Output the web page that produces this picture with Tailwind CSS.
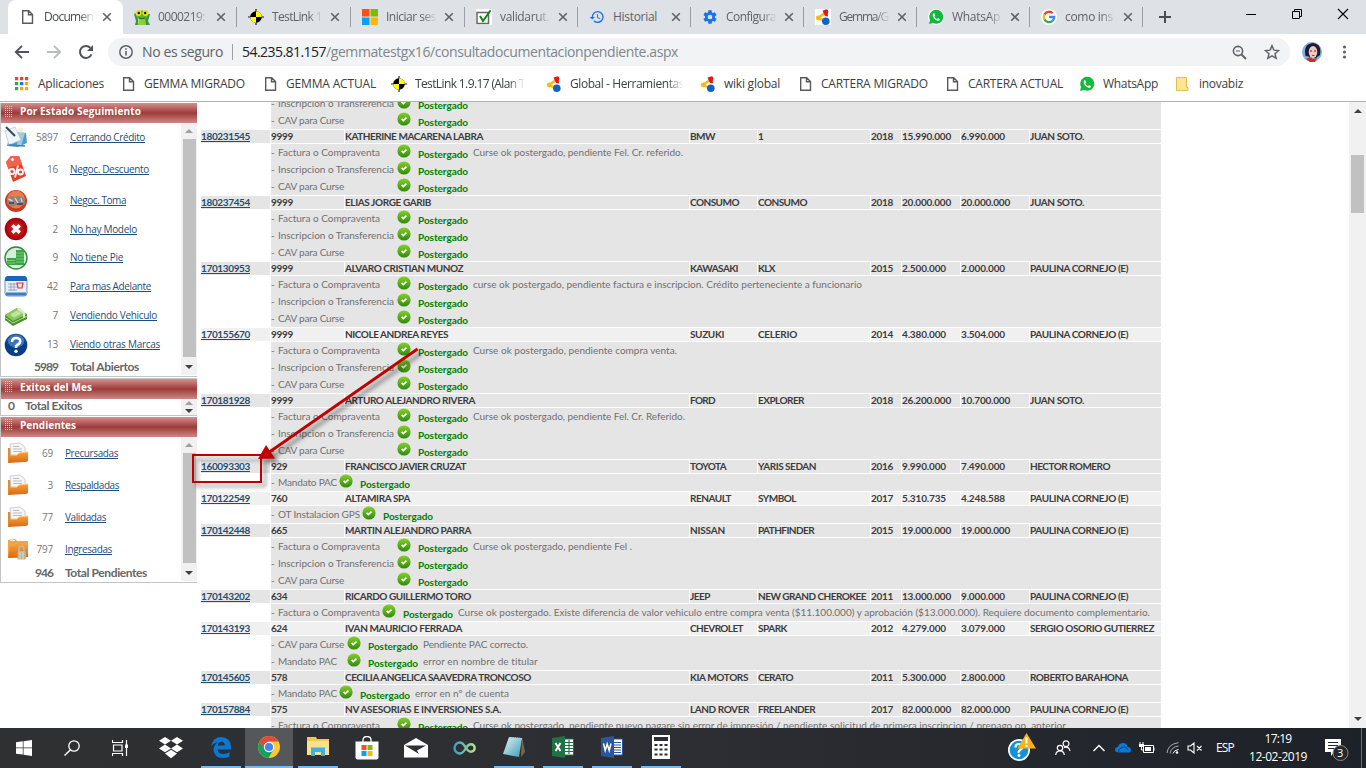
<!DOCTYPE html>
<html lang="es">
<head>
<meta charset="utf-8">
<title>Documentacion pendiente</title>
<script src="https://cdn.jsdelivr.net/npm/@tailwindcss/browser@4"></script>
</head>
<body class="relative flex h-[768px] w-[1366px] flex-col overflow-hidden bg-white font-['Open_Sans',sans-serif] text-[12px] text-[#5f6368]">

<svg class="absolute h-0 w-0">
  <defs>
    <linearGradient id="gGreen" x1="0" y1="0" x2="0" y2="1"><stop offset="0" stop-color="#86d02b"/><stop offset="1" stop-color="#2f8a0c"/></linearGradient>
    <radialGradient id="gRed"><stop offset="0" stop-color="#e0302c"/><stop offset="1" stop-color="#a30008"/></radialGradient>
    <linearGradient id="gFold" x1="0" y1="0" x2="0" y2="1"><stop offset="0" stop-color="#f7a03c"/><stop offset="1" stop-color="#d9690c"/></linearGradient>
    <linearGradient id="gInf" x1="0" y1="0" x2="1" y2="0"><stop offset="0" stop-color="#3b9fc4"/><stop offset="1" stop-color="#b4e08a"/></linearGradient>
    <linearGradient id="gNote" x1="0" y1="0" x2="1" y2="1"><stop offset="0" stop-color="#e4f6fa"/><stop offset="1" stop-color="#3f9bb4"/></linearGradient>
  </defs>
  <symbol id="page" viewBox="0 0 16 16"><path d="M1.700 1.700h6L11.500 5.500v8.800H1.700zM7.500 1.700v4h4" fill="none" stroke="#5a5a5a" stroke-width="1.400"/></symbol>
  <symbol id="frog" viewBox="0 0 16 16"><path d="M0 5l2-1 2 3v9H1l1-4zM16 5l-3 0-2 3v8h5l-2-4z" fill="#2e9a45"/><ellipse cx="8" cy="6" rx="6" ry="4.600" fill="#5cb531"/><path d="M5 9h6l1 7H4z" fill="#8ccf3a"/><circle cx="4.500" cy="4" r="3" fill="#e9e21d"/><circle cx="11.500" cy="4" r="3" fill="#e9e21d"/><circle cx="4.800" cy="4" r="1.200" fill="#111"/><circle cx="11.200" cy="4" r="1.200" fill="#111"/><path d="M5 9q3 1.600 6 0" stroke="#155a18" fill="none"/></symbol>
  <symbol id="tlink" viewBox="0 0 16 16"><path d="M8 0v16M0 8h16" stroke="#222" stroke-width="1.200"/><circle cx="8" cy="8" r="5.800" fill="#000"/><path d="M8 8V2.200A5.800 5.800 0 0 1 13.800 8zM8 8v5.800A5.800 5.800 0 0 1 2.200 8z" fill="#ff0"/></symbol>
  <symbol id="ms" viewBox="0 0 16 16"><path d="M0 0h7.500v7.500H0z" fill="#f6511d"/><path d="M8.500 0H16v7.500H8.500z" fill="#7fbb00"/><path d="M0 8.500h7.500V16H0z" fill="#00a4ef"/><path d="M8.500 8.500H16V16H8.500z" fill="#ffb900"/></symbol>
  <symbol id="check" viewBox="0 0 16 16"><path d="M0 0h16v16H0z" fill="#fff"/><path d="M1 3.500h11.500v11H1z" fill="#fff" stroke="#666" stroke-width="1.500"/><path d="M4 7l3 5L14.500 1.500" fill="none" stroke="#078a0a" stroke-width="2"/></symbol>
  <symbol id="hist" viewBox="0 0 24 24"><path d="M13 3a9 9 0 0 0-9 9H1l3.900 3.900L9 12H6a7 7 0 1 1 2.060 4.940l-1.420 1.420A9 9 0 1 0 13 3zm-1 5v5l4.280 2.540.720-1.210-3.500-2.080V8z" fill="#1a73e8"/></symbol>
  <symbol id="gear" viewBox="0 0 24 24"><path d="M19.430 12.980c.04-.32.07-.64.07-.98s-.03-.66-.07-.98l2.110-1.650c.19-.15.24-.42.120-.64l-2-3.460c-.12-.22-.39-.3-.61-.22l-2.490 1c-.52-.4-1.080-.73-1.690-.98l-.38-2.650A.49.49 0 0 0 14 2h-4c-.25 0-.46.180-.49.420l-.38 2.650c-.61.25-1.170.59-1.690.98l-2.490-1c-.23-.09-.49 0-.61.220l-2 3.460c-.13.220-.07.490.120.640l2.110 1.650c-.04.320-.07.650-.07.980s.03.660.07.980l-2.110 1.650c-.19.150-.24.420-.12.640l2 3.460c.12.220.39.300.61.220l2.490-1c.52.400 1.080.730 1.690.980l.38 2.650c.03.240.240.420.490.420h4c.25 0 .46-.18.49-.42l.38-2.650c.61-.25 1.170-.59 1.690-.98l2.490 1c.23.090.490 0 .61-.22l2-3.460c.12-.22.070-.49-.12-.64zM12 15.500a3.500 3.500 0 1 1 0-7 3.500 3.500 0 0 1 0 7z" fill="#1a73e8"/></symbol>
  <symbol id="jo" viewBox="0 0 16 16"><path d="M10 4L3 9l8 3.500" fill="none" stroke="#fdb813" stroke-width="2.400"/><path d="M7.500 1.500l5-1 .5 7-3-.5z" fill="#e0191c"/><circle cx="11" cy="2.800" r="2.400" fill="#e0191c"/><circle cx="3.300" cy="9" r="2.400" fill="#fdb813"/><circle cx="10.800" cy="12.200" r="3.800" fill="#0b66c2"/></symbol>
  <symbol id="jow" viewBox="0 0 16 16"><path d="M0 0h16v16H0z" fill="#fff"/><use href="#jo"/></symbol>
  <symbol id="wa" viewBox="0 0 16 16"><circle cx="8" cy="8" r="8" fill="#fff"/><path d="M1 15l1-4A7 7 0 1 1 5 14z" fill="#12b93f"/><path d="M5.500 4.200c-1.800 1.600-.3 4.200 1.300 5.800s4 2.600 5.200 1l-.2-1-1.700-.8-1 .9C7.800 9.500 7 8.600 6.400 7.400l.8-1-.7-1.900z" fill="#fff"/></symbol>
  <symbol id="goog" viewBox="0 0 16 16"><circle cx="8" cy="8" r="8" fill="#fff"/><g fill="none" stroke-width="2.300"><path d="M11.700 4.300A5.200 5.200 0 0 0 3.400 5.600" stroke="#ea4335"/><path d="M3.400 5.600a5.200 5.200 0 0 0 0 4.800" stroke="#fbbc05"/><path d="M3.400 10.400a5.200 5.200 0 0 0 8 1.500" stroke="#34a853"/><path d="M11.400 11.900A5.200 5.200 0 0 0 13.200 8H8" stroke="#4285f4"/></g></symbol>
  <symbol id="apps" viewBox="0 0 16 16"><path d="M1 1h3.200v3.200H1zM6 1h3.200v3.200H6zM11 1h3.200v3.200H11z" fill="#e94235"/><path d="M1 6h3.200v3.200H1zM1 11h3.200v3.200H1z" fill="#34a853"/><path d="M6 6h3.200v3.200H6z" fill="#1a73e8"/><path d="M11 6h3.200v3.200H11zM6 11h3.200v3.200H6zM11 11h3.200v3.200H11z" fill="#f5a911"/></symbol>
  <symbol id="fold" viewBox="0 0 16 16"><path d="M.500 1.500h10v10h1.500v3H.500z" fill="#ffe694" stroke="#e5bd4a"/></symbol>
  <symbol id="x" viewBox="0 0 10 10"><path d="M1.200 1.200l7.600 7.600M8.800 1.200L1.200 8.800" stroke="#5f6368" stroke-width="1.600"/></symbol>
  <symbol id="ok" viewBox="0 0 14 14"><circle cx="7" cy="7" r="6.600" fill="url(#gGreen)"/><path d="M4.600 6.900l1.700 1.700 3.200-3" fill="none" stroke="#fff" stroke-width="1.700"/></symbol>

  <symbol id="s0" viewBox="0 0 24 24"><path d="M5 13l9-6 8 1 1 10-9 4-11-1z" fill="#4f9bcc"/><path d="M14 7l7 1-4 13-4-1z" fill="#9ccbe6"/><path d="M1 6l10-4 6 13-12 5z" fill="#eef4f8" stroke="#a8bccb" stroke-width=".6"/><path d="M2 2l9 9" stroke="#344656" stroke-width="2"/><path d="M12 6l4-4 4 2-3 4z" fill="#f2f1d8"/><path d="M5 20l16 1" stroke="#4181ab" stroke-width="1.400"/></symbol>
  <symbol id="s1" viewBox="0 0 24 28"><path d="M2 7l5-6h8l7 20-13 6z" fill="#e8412c"/><path d="M2 7l5-6h8l3 8-14 4z" fill="#f1634c"/><circle cx="8.500" cy="4.500" r="1.700" fill="#fff" stroke="#888" stroke-width=".6"/><g fill="none" stroke="#fff" stroke-width="1.800"><circle cx="8" cy="16.500" r="2.500"/><circle cx="16.500" cy="17" r="2.500"/><path d="M14 10.500l-3 12"/></g></symbol>
  <symbol id="s2" viewBox="0 0 24 24"><circle cx="12" cy="12" r="11" fill="#c93a22"/><circle cx="12" cy="10.500" r="9" fill="#ee7a4e"/><path d="M3 9q4-3 8-1l3-1q6 0 7 4v4q-4 3-7 1l-5 1q-5 0-6-3z" fill="#8c8582"/><path d="M4.500 10l4 2M11 9l3 5M17 9l1 4" stroke="#d5d2d0" stroke-width="1.400"/><path d="M5 14h5M13 15h6" stroke="#463e3e" stroke-width="1.500"/></symbol>
  <symbol id="s3" viewBox="0 0 24 24"><circle cx="12" cy="12" r="11.300" fill="url(#gRed)"/><path d="M8.300 8.300l7.400 7.400M15.700 8.300l-7.400 7.400" stroke="#fff" stroke-width="3.500"/></symbol>
  <symbol id="s4" viewBox="0 0 24 24"><circle cx="12" cy="12" r="11" fill="#d9eed8" stroke="#2b8b35" stroke-width="1.400"/><path d="M12 4h8v15h-8zM3 12h9v7H3z" fill="#3ba443"/><path d="M12 7h8M12 10h8M12 13h8M12 16h8M3 14.500h8M3 17h8" stroke="#8bd48c" stroke-width=".8"/></symbol>
  <symbol id="s5" viewBox="0 0 24 22"><rect x="1" y="2" width="22" height="19" rx="3" fill="#e8eef6" stroke="#6a93c8"/><path d="M1 4q0-3 3-3h16q3 0 3 3v2H1z" fill="#1b66b4"/><path d="M4 9h9M4 12h9M4 15h9M7 8v8M10 8v8" stroke="#8d9db5" stroke-width=".8"/><path d="M13 8h6l-1 5h-4z" fill="#f6dedf" stroke="#d23a3a" stroke-width="1.200"/><path d="M2 17.500h20v2q0 1-2 1H4q-2 0-2-1z" fill="#3b7ec6"/></symbol>
  <symbol id="s6" viewBox="0 0 24 22"><path d="M1 10l12-7 10 6v5L9 21l-8-6z" fill="#4c8f31"/><path d="M1 10l12-7 10 6-14 7z" fill="#8cc95c"/><path d="M6 9.500l7-4 5 3-8 4z" fill="#bfe49c"/><path d="M1 12.500l8 5.500 14-7" stroke="#b3dd90" fill="none"/><path d="M13 3.500l3-1 5 5v5l-2 1v-5l-5-3z" fill="#dcebcb"/></symbol>
  <symbol id="s7" viewBox="0 0 24 24"><circle cx="12" cy="12" r="11.300" fill="#073f86"/><ellipse cx="12" cy="8" rx="8.500" ry="6.500" fill="#3b76bb"/><path d="M8 9q0-4 4.200-4t4 3.500q0 2-2.200 3t-2 3.500" stroke="#fff" stroke-width="2.600" fill="none"/><circle cx="12" cy="18.300" r="1.700" fill="#fff"/></symbol>
  <symbol id="p0" viewBox="0 0 22 22"><path d="M1 6h5l1 3v10l-6 2z" fill="#e08a2e"/><path d="M3 2l10-1 5 4v10H4z" fill="#f6f6f6" stroke="#c4c4c4" stroke-width=".8"/><path d="M6 4.500h6M6 7h9M6 9.500h9" stroke="#b0b0b0" stroke-width=".8"/><path d="M1 21l3-8h6l2-2 9-1v9q-1 1-3 1z" fill="url(#gFold)"/><path d="M4 13h6l2-2 9-1" stroke="#ffc887" fill="none"/></symbol>
  <symbol id="p1" viewBox="0 0 22 22"><path d="M1 2l7-1 2 2h11v16l-20 1z" fill="#f4a244"/><path d="M3 2.500h5" stroke="#fff3dc"/><path d="M1 20l2-12h5l2-2h11v13z" fill="url(#gFold)"/><path d="M12 14v-3q0-3 2.500-3t2.500 3v3" fill="none" stroke="#b9b9b9" stroke-width="1.600"/><rect x="10.500" y="13" width="8.500" height="8.500" rx="1" fill="#b9b49b"/><path d="M13 13.500v7.500M16 13.500v7.500" stroke="#e2dfcc"/></symbol>
  <symbol id="grip" viewBox="0 0 8 12"><path fill="#e7c1bf" d="M0 0h1v1H0zM2 0h1v1H2zM4 0h1v1H4zM6 0h1v1H6zM0 2h1v1H0zM2 2h1v1H2zM4 2h1v1H4zM6 2h1v1H6zM0 4h1v1H0zM2 4h1v1H2zM4 4h1v1H4zM6 4h1v1H6zM0 6h1v1H0zM2 6h1v1H2zM4 6h1v1H4zM6 6h1v1H6zM0 8h1v1H0zM2 8h1v1H2zM4 8h1v1H4zM6 8h1v1H6zM0 10h1v1H0zM2 10h1v1H2zM4 10h1v1H4zM6 10h1v1H6z"/></symbol>
  <symbol id="up" viewBox="0 0 8 4"><path d="M0 4L4 0l4 4z" fill="currentColor"/></symbol>
  <symbol id="down" viewBox="0 0 8 4"><path d="M0 0l4 4 4-4z" fill="currentColor"/></symbol>
</svg>

<!-- Tab strip -->
<header class="flex h-[34px] shrink-0 bg-[#dee1e6]">
  <div id="tabs" class="flex"></div>
  <div class="flex w-[48px] items-center pl-[16px]">
    <svg class="h-3 w-3" viewBox="0 0 12 12"><path d="M6 0v12M0 6h12" stroke="#4a4d51" stroke-width="2"/></svg>
  </div>
  <div class="ml-auto flex h-[28px] items-center">
    <div class="flex w-[46px] justify-center"><svg class="h-3 w-3" viewBox="0 0 12 12"><path d="M1 6.500h10" stroke="#000"/></svg></div>
    <div class="flex w-[46px] justify-center"><svg class="h-3 w-3" viewBox="0 0 12 12"><path d="M1.500 3.500h7v7h-7zM3.500 3.500v-2h7v7h-2" fill="none" stroke="#000"/></svg></div>
    <div class="flex w-[46px] justify-center"><svg class="h-3 w-3" viewBox="0 0 12 12"><path d="M1 1l10 10M11 1L1 11" stroke="#000" stroke-width="1.100"/></svg></div>
  </div>
</header>

<!-- Address bar -->
<div class="flex h-[36px] shrink-0 items-center">
  <svg class="ml-[14px] h-4 w-4" viewBox="0 0 16 16"><path d="M15 8H2M8 1.800L1.800 8 8 14.200" fill="none" stroke="#505357" stroke-width="1.900"/></svg>
  <svg class="ml-[16px] h-4 w-4" viewBox="0 0 16 16"><path d="M1 8h13M8 1.800L14.200 8 8 14.200" fill="none" stroke="#b9bbbe" stroke-width="1.900"/></svg>
  <svg class="ml-[16px] h-4 w-4" viewBox="0 0 16 16"><path d="M13.500 10.300A6 6 0 1 1 12.300 3.800" fill="none" stroke="#505357" stroke-width="2"/><path d="M15 1v6H9z" fill="#505357"/></svg>
  <div class="ml-[14px] flex h-[28px] w-[1182px] items-center rounded-full bg-[#f1f3f4] text-[14px]">
    <svg class="ml-[11px] h-[14px] w-[14px]" viewBox="0 0 14 14"><circle cx="7" cy="7" r="6.200" fill="none" stroke="#5f6368" stroke-width="1.500"/><path d="M7 6v4.500M7 3.200v1.600" stroke="#5f6368" stroke-width="1.600"/></svg>
    <div class="ml-[9px] w-[90px] pb-[1px]"><span data-w="81">No es seguro</span></div>
    <div class="h-4 w-px bg-[#9aa0a6]"></div>
    <div class="ml-[9px] flex pb-[1px] text-[#80868b]"><span class="text-[#202124]" data-w="84">54.235.81.157</span><span data-w="352">/gemmatestgx16/consultadocumentacionpendiente.aspx</span></div>
    <svg class="mr-[17px] ml-auto h-[15px] w-[15px]" viewBox="0 0 15 15"><circle cx="6" cy="6" r="4.600" fill="none" stroke="#5f6368" stroke-width="1.600"/><path d="M9.500 9.500l4.500 4.500" stroke="#5f6368" stroke-width="2"/><path d="M4 6h4" stroke="#5f6368"/></svg>
    <svg class="mr-[10px] h-[16px] w-[16px]" viewBox="0 0 24 24"><path d="M12 2.500l2.800 6.700 7.200.600-5.500 4.700 1.700 7L12 17.800l-6.200 3.700 1.700-7L2 9.800l7.200-.6z" fill="none" stroke="#5f6368" stroke-width="2.200"/></svg>
  </div>
  <svg class="ml-[12px] h-5 w-5" viewBox="0 0 20 20"><circle cx="10" cy="10" r="10" fill="#7fb0e6"/><path d="M3.500 14Q1 2 11 1q9 1 7 12l-4 3z" fill="#221a2e"/><ellipse cx="11" cy="10" rx="4.300" ry="6" fill="#edc9c4"/><path d="M4 17l4-2 3 2 4-1-2 4H8z" fill="#c4301c"/><path d="M8 9h2M12 9h2" stroke="#433"/><path d="M10 13.500h2.500" stroke="#b33"/></svg>
  <svg class="ml-[20px] h-[14px] w-[5px]" viewBox="0 0 5 14"><g fill="#5f6368"><circle cx="2.500" cy="2" r="1.600"/><circle cx="2.500" cy="7" r="1.600"/><circle cx="2.500" cy="12" r="1.600"/></g></svg>
</div>

<!-- Bookmarks -->
<nav id="marks" class="flex h-[31px] shrink-0 items-center pb-[3px] pl-[14px] text-[#3c4043]"></nav>

<!-- Page -->
<main class="flex h-[627px] shrink-0 overflow-hidden border-t border-[#b3b1b3] font-[Lato,sans-serif] text-[10px]">
  <aside class="w-[198px] shrink-0 pr-px font-['Open_Sans',sans-serif]">
    <section class="h-[274px] border-b border-l border-[#c4c4c4]">
      <h2 class="mt-[1px] flex h-[20px] items-center bg-linear-to-b from-[#d4908f] via-[#9c3b39] to-[#cd8886] pb-[3px] pl-[4px] font-bold text-white"><svg class="mr-[7px] h-3 w-2"><use href="#grip"/></svg><span data-w="121">Por Estado Seguimiento</span></h2>
      <div class="flex h-[252px]">
        <div id="estado" class="w-[180px]"></div>
        <div class="flex w-[16px] flex-col items-center bg-[#f1f1f1] pt-[6px] pb-[6px]"><svg class="h-1 w-2 text-[#a0a0a0]"><use href="#up"/></svg><div class="mt-[6px] h-[218px] w-[13px] bg-[#c1c1c1]"></div><svg class="mt-auto h-1 w-2 text-[#404040]"><use href="#down"/></svg></div>
      </div>
    </section>
    <section class="mt-[1px] h-[38px] border-y border-l border-[#c4c4c4]">
      <h2 class="flex h-[20px] items-center bg-linear-to-b from-[#d4908f] via-[#9c3b39] to-[#cd8886] pb-[4px] pl-[4px] font-bold text-white"><svg class="mr-[7px] h-3 w-2"><use href="#grip"/></svg><span data-w="72">Exitos del Mes</span></h2>
      <div class="flex h-[16px]">
        <div class="flex w-[180px] items-center pb-[2px] pl-[7px] font-[Lato,sans-serif] text-[12px] font-bold text-[#666]"><span data-w="6">0</span><span class="ml-[11px]" data-w="57">Total Exitos</span></div>
        <div class="flex w-[16px] flex-col items-center justify-center gap-[4px] bg-[#f1f1f1]"><svg class="h-1 w-2 text-[#a0a0a0]"><use href="#up"/></svg><svg class="h-1 w-2 text-[#404040]"><use href="#down"/></svg></div>
      </div>
    </section>
    <section class="h-[166px] border-b border-l border-[#c4c4c4]">
      <h2 class="mt-[1px] flex h-[20px] items-center bg-linear-to-b from-[#d4908f] via-[#9c3b39] to-[#cd8886] pb-[4px] pl-[4px] font-bold text-white"><svg class="mr-[7px] h-3 w-2"><use href="#grip"/></svg><span data-w="56">Pendientes</span></h2>
      <div class="flex h-[144px]">
        <div id="pend" class="w-[180px]"></div>
        <div class="flex w-[16px] flex-col items-center bg-[#f1f1f1] pt-[6px] pb-[6px]"><svg class="h-1 w-2 text-[#a0a0a0]"><use href="#up"/></svg><div class="mt-[6px] h-[110px] w-[13px] bg-[#c1c1c1]"></div><svg class="mt-auto h-1 w-2 text-[#404040]"><use href="#down"/></svg></div>
      </div>
    </section>
  </aside>
  <div id="grid" class="-mt-[7px] ml-[3px] w-[960px] shrink-0"></div>
  <div class="ml-auto flex w-[17px] flex-col items-center bg-[#f1f1f1] pt-[7px] pb-[7px]">
    <svg class="h-1 w-2 text-[#404040]"><use href="#up"/></svg>
    <div class="mt-[42px] h-[58px] w-[13px] bg-[#c1c1c1]"></div>
    <svg class="mt-auto h-1 w-2 text-[#404040]"><use href="#down"/></svg>
  </div>
</main>

<!-- Taskbar -->
<footer class="flex h-[40px] shrink-0 bg-linear-to-r from-[#2e3032] via-[#2d2e33] to-[#1d2128] text-white">
  <div class="flex w-[48px] items-center justify-center"><svg class="h-4 w-4" viewBox="0 0 16 16"><path d="M0 2.300l6.800-1v6.300H0zM7.500 1.200L16 0v7.600H7.500zM0 8.300h6.800v6.300L0 13.700zM7.500 8.300H16V16l-8.500-1.200z" fill="#fff"/></svg></div>
  <div class="flex w-[48px] items-center justify-center"><svg class="h-4 w-4" viewBox="0 0 16 16"><circle cx="10" cy="6" r="5.200" fill="none" stroke="#fff" stroke-width="1.300"/><path d="M6.500 9.800L.5 15.500" stroke="#fff" stroke-width="1.500"/></svg></div>
  <div class="flex w-[48px] items-center justify-center"><svg class="h-4 w-4" viewBox="0 0 16 16"><path d="M.500 0v2.500h10V0M.500 16v-2.500h10V16M1.500 5h8.500v6H1.500zM14.500 0v16" fill="none" stroke="#fff" stroke-width="1.200"/><path d="M13 4.500h3v3.500h-3z" fill="#fff"/></svg></div>
  <div class="flex w-[54px] items-center justify-center"><svg class="h-[22px] w-6" viewBox="0 0 24 22"><path d="M6 0l6 3.800-6 3.800L0 3.800zM18 0l6 3.800-6 3.800-6-3.800zM6 7.600l6 3.800-6 3.800-6-3.800zM18 7.600l6 3.800-6 3.800-6-3.800zM6 16.600l6-3.800 6 3.800-6 4.600z" fill="#fff"/></svg></div>
  <div class="flex w-[46px] justify-center"><div class="flex w-[40px] items-center justify-center border-b-2 border-[#76b9ed]"><svg class="h-[21px] w-5" viewBox="0 0 20 21"><path d="M0 9.500Q1.500 0 10.500 0 20 1 20 10v2.500H6.500q.5 4.500 6 4.500 3.300 0 6-1.700v4.200Q16 21 12 21 3 21 2.500 12.500 3 7.500 7 5.200 2.500 5.800 0 9.500zM6.800 8.500h7q0-3.700-3.300-3.700T6.800 8.500z" fill="#0a78d7" fill-rule="evenodd"/></svg></div></div>
  <div class="ml-px flex w-[48px] items-center justify-center border-b-2 border-[#76b9ed] bg-[#55575a]"><svg class="h-[22px] w-[22px]" viewBox="0 0 22 22"><circle cx="11" cy="11" r="11" fill="#fcc934"/><path d="M11 5.500h9.500A11 11 0 0 0 1.500 5.500L6 13z" fill="#de4b3c"/><path d="M1.500 5.500A11 11 0 0 0 10.500 22l5-8.500L6.500 13z" fill="#17a05e"/><circle cx="11" cy="11" r="5.200" fill="#fff"/><circle cx="11" cy="11" r="4.100" fill="#4285f4"/></svg></div>
  <div class="ml-[5px] flex w-[40px] items-center justify-center border-b-2 border-[#76b9ed]"><svg class="h-5 w-[22px]" viewBox="0 0 22 20"><path d="M0 0h9l1 2h12v16H0z" fill="#f3c84e"/><path d="M0 4h22v14H0z" fill="#fce08a"/><path d="M4 19v-8.500h14V19h-4v-4H8v4z" fill="#38b2e8"/></svg></div>
  <div class="ml-[5px] flex w-[48px] items-center justify-center"><svg class="h-6 w-6" viewBox="0 0 24 24"><path d="M8 6V4q0-3.500 4-3.500T16 4v2" fill="none" stroke="#fff" stroke-width="1.300"/><path d="M.500 5.500h23v16q0 2-2 2h-19q-2 0-2-2z" fill="#fff"/><path d="M6.500 9h5v5h-5z" fill="#f25022"/><path d="M12.500 9h5v5h-5z" fill="#7fba00"/><path d="M6.500 15h5v5h-5z" fill="#00a4ef"/><path d="M12.500 15h5v5h-5z" fill="#ffb900"/></svg></div>
  <div class="flex w-[50px] items-center justify-center"><svg class="h-5 w-6" viewBox="0 0 24 20"><path d="M0 7l12-7 12 7v12.500H0z" fill="#fff"/><path d="M1 7.500h21L13 12.500l2 3.500z" fill="#2e3034"/></svg></div>
  <div class="flex w-[48px] items-center justify-center"><svg class="h-[14px] w-6" viewBox="0 0 24 14"><path d="M13 7C11 3.500 9.500 1.500 7 1.500a5.500 5.500 0 0 0 0 11c2.500 0 4-2 6-5.500 1.500-2.500 3-3.700 5-3.700a3.700 3.700 0 0 1 0 7.400c-2 0-3.500-1.200-5-3.700z" fill="none" stroke="url(#gInf)" stroke-width="2.400"/></svg></div>
  <div class="ml-[5px] flex w-[40px] items-center justify-center border-b-2 border-[#76b9ed]"><svg class="h-[22px] w-[22px]" viewBox="0 0 22 22"><path d="M19 1l3 15-4 5z" fill="#7b6848"/><path d="M6 1l13 1-3 19L0 18z" fill="url(#gNote)"/><path d="M6 2l13 1" stroke="#bcc8cd" stroke-width="2" stroke-dasharray="1 1"/></svg></div>
  <div class="ml-[9px] flex w-[40px] items-center justify-center border-b-2 border-[#76b9ed]"><svg class="h-[22px] w-[22px]" viewBox="0 0 22 22"><path d="M12 3h9.500v16H12z" fill="#fff" stroke="#1f7244"/><path d="M13 6.500h8M13 9.500h8M13 12.500h8M13 15.500h8M17 4v14" stroke="#1f7244" stroke-width="1.200"/><path d="M0 2l13-2v22L0 20z" fill="#1f7244"/><path d="M3.500 7l5 8M8.500 7l-5 8" stroke="#fff" stroke-width="1.900"/></svg></div>
  <div class="ml-[9px] flex w-[40px] items-center justify-center border-b-2 border-[#76b9ed]"><svg class="h-[22px] w-[22px]" viewBox="0 0 22 22"><path d="M12 3h9.500v16H12z" fill="#fff" stroke="#2b579a"/><path d="M13 6.500h7M13 9h7M13 11.500h7M13 14h7M13 16.500h7" stroke="#2b579a"/><path d="M0 2l13-2v22L0 20z" fill="#2b579a"/><path d="M2.500 7.500l1.700 7 2-6.500 2 6.500 1.800-7" fill="none" stroke="#fff" stroke-width="1.500"/></svg></div>
  <div class="ml-[9px] flex w-[40px] items-center justify-center border-b-2 border-[#76b9ed]"><svg class="h-6 w-[18px]" viewBox="0 0 18 24"><path d="M0 0h18v24H0z" fill="#fff"/><path d="M2 2h14v4H2z" fill="#2b2d31"/><path d="M2.500 10h3M7.500 10h3M12.500 10h3M2.500 14.500h3M7.500 14.500h3M12.500 14.500h3M2.500 19.500h3M7.500 19.500h3M12.500 19.500h3" stroke="#2b2d31" stroke-width="2"/></svg></div>
  <div class="ml-auto flex items-center">
    <svg class="mr-[18px] h-[30px] w-[30px]" viewBox="0 0 30 30"><circle cx="12" cy="17" r="11" fill="#fff"/><circle cx="12" cy="17" r="9.300" fill="#1393d6"/><path d="M8.500 14.500q0-3.500 3.500-3.500t3.500 3q0 2-2.200 3t-1.500 3" stroke="#fff" stroke-width="2.200" fill="none"/><circle cx="12" cy="22.500" r="1.400" fill="#fff"/><path d="M19.500 0L29 15.500H10.500z" fill="#f7b21c"/><path d="M19.500 4.500v6M19.500 12v2" stroke="#fff" stroke-width="2"/></svg>
    <svg class="mr-[22px] h-4 w-4" viewBox="0 0 16 16"><g fill="none" stroke="#fff" stroke-width="1.200"><circle cx="5" cy="8" r="2.700"/><path d="M.700 15q.3-4.200 4.300-4.200T9.300 15"/><circle cx="11" cy="3.700" r="2.900"/><path d="M9 7.500q5-1.500 6 3.500"/></g></svg>
    <svg class="mr-[10px] h-3 w-3" viewBox="0 0 12 12"><path d="M.500 9L6 3.500 11.500 9" fill="none" stroke="#fff" stroke-width="1.400"/></svg>
    <svg class="mr-[8px] h-[10px] w-4" viewBox="0 0 16 10"><path d="M3 9.500Q0 9 0 6.500T3 4q1-4 5-4t4.500 4q3.500 0 3.500 3t-3 2.500z" fill="#0a78d7"/><path d="M4 9.500q-1-4 2.500-4.500 4-3 6 1.500" stroke="#23262b" fill="none" stroke-width=".7"/></svg>
    <svg class="mr-[11px] h-3 w-4" viewBox="0 0 16 12"><path d="M4.500 3.500h10v7h-10z" fill="none" stroke="#fff"/><path d="M6 5h6v4H6z" fill="#fff"/><path d="M15 5.500v3M1 0v3M4 0v3M2.500 5v3h2" stroke="#fff" fill="none"/><path d="M0 2h5v3H0z" fill="#fff"/></svg>
    <svg class="mr-[8px] h-3 w-[13px]" viewBox="0 0 13 12"><g fill="none" stroke="#aaa"><path d="M1 11Q2 2 12.500.700"/><path d="M4 11.500Q5 5 12.500 4"/><path d="M7 11.500Q8 8 12.500 7.500" stroke="#fff"/></g><circle cx="11" cy="10.500" r="1.300" fill="#fff"/></svg>
    <svg class="mr-[13px] h-3 w-4" viewBox="0 0 16 12"><path d="M1 4h2.500L7 1v10L3.500 8H1zM10 4l4.500 4.500M14.500 4L10 8.500" fill="none" stroke="#fff" stroke-width="1.100"/></svg>
    <span data-w="18">ESP</span>
    <div class="ml-[13px] flex w-[62px] flex-col items-center pb-[1px] leading-[18px]"><span data-w="27">17:19</span><span data-w="58">12-02-2019</span></div>
    <div class="relative ml-[16px] h-[20px] w-[26px]">
      <svg class="h-[24px] w-[26px]" viewBox="0 0 26 24"><path d="M0 1h16v13H9l-3 4v-4H0z" fill="#fff"/><path d="M3 4.500h10M3 7.500h10M3 10.500h7" stroke="#23262b"/><circle cx="15.500" cy="15" r="7.500" fill="#24272c" stroke="#888"/></svg>
      <span class="absolute top-[8px] left-[12px] text-[11px] leading-[14px]">3</span>
    </div>
    <div class="ml-[10px] h-[40px] w-[5px] border-l border-[#6a6d71]"></div>
  </div>
</footer>

<!-- Arrow and frame drawn over the grid -->
<svg class="absolute top-[335px] left-[180px] h-[160px] w-[250px] [filter:drop-shadow(4px_4px_2px_rgba(0,0,0,.45))]" viewBox="180 335 250 160">
  <rect x="193" y="455" width="68" height="27" fill="none" stroke="#c00000" stroke-width="2"/>
  <path d="M417.500 349L268 453" stroke="#c00000" stroke-width="3"/>
  <path d="M258 459l8-14 9 13.500z" fill="#c00000"/>
</svg>

<script>
const $ = id => document.getElementById(id);
const T = (s, w) => `<span data-w="${w}">${s}</span>`;

$('tabs').innerHTML = [
  ['page','Documen',115,49],['frog','0000219:',114,47],['tlink','TestLink 1',114,50],['ms','Iniciar ses',114,50],
  ['check','validarut.',113,49],['hist','Historial',113,44],['gear','Configura',113,50],['jow','Gemma/G',113,49],
  ['wa','WhatsAp',113,48],['goog','como ins',113,48]
].map(([ic, t, w, tw], i) => {
  const label = `<div class="w-[51px] pb-px whitespace-nowrap ${t === 'Historial' ? '' : '[mask-image:linear-gradient(to_right,black_70%,transparent_100%)]'}">${T(t, tw)}</div>`;
  return i === 0
    ? `<div class="ml-[8px] flex h-[34px] w-[115px] items-center rounded-t-lg bg-white pl-[13px] text-[#45494d]"><svg class="mr-[7px] h-4 w-4"><use href="#${ic}"/></svg>${label}<svg class="ml-[7px] h-[10px] w-[10px]"><use href="#x"/></svg></div>`
    : `<div class="flex h-[34px] shrink-0 items-center" style="width:${w}px"><svg class="mr-[8px] ml-[11px] h-4 w-4 shrink-0"><use href="#${ic}"/></svg>${label}<svg class="ml-[7px] h-[10px] w-[10px] shrink-0"><use href="#x"/></svg><div class="ml-auto h-[20px] w-px bg-[#9a9da1]"></div></div>`;
}).join('');

$('marks').innerHTML = [
  ['apps','Aplicaciones',108,24,66],['page','GEMMA MIGRADO',142,22,101],['page','GEMMA ACTUAL',127,22,90],['tlink','TestLink 1.9.17 (Alan T',155,24,110],
  ['jo','Global - Herramientas',154,24,114],['jo','wiki global',99,24,56],['page','CARTERA MIGRADO',147,22,107],['page','CARTERA ACTUAL',133,22,95],
  ['wa','WhatsApp',97,24,55],['fold','inovabiz',90,23,44]
].map(([ic, t, w, o, tw]) => `<div class="flex shrink-0 items-center" style="width:${w}px"><svg class="h-4 w-4 shrink-0" style="margin-right:${o - 16}px"><use href="#${ic}"/></svg><div class="${/Alan|Herr/.test(t) ? '[mask-image:linear-gradient(to_right,black_85%,transparent)]' : ''}">${T(t, tw)}</div></div>`).join('');

const side = (rows, pend, total, tw, nw) => rows.map(([ic, h, ih, n, t, w]) =>
  `<div class="flex items-center" style="height:${h}px"><svg class="shrink-0" style="margin-left:${pend ? 6 : 3}px;width:${pend ? 22 : 24}px;height:${ih}px"><use href="#${ic}"/></svg><div class="text-right text-[#777]" style="width:${pend ? 24 : 30}px">${T(n, String(n).length * 5.5)}</div><a class="ml-[12px] text-[#1f4e79] underline underline-offset-1">${T(t, w)}</a></div>`
).join('') + `<div class="flex h-[16px] items-center font-[Lato,sans-serif] text-[12px] font-bold text-[#666]"><div class="text-right" style="width:${pend ? 52 : 57}px">${T(total[0], nw)}</div><div class="ml-[12px]">${T(total[1], tw)}</div></div>`;
$('estado').innerHTML = side([
  ['s0',28,24,5897,'Cerrando Crédito',75],['s1',36,28,16,'Negoc. Descuento',79],['s2',27,24,3,'Negoc. Toma',56],['s3',30,24,2,'No hay Modelo',67],
  ['s4',27,24,9,'No tiene Pie',53],['s5',30,22,42,'Para mas Adelante',81],['s6',29,22,7,'Vendiendo Vehiculo',87],['s7',29,24,13,'Viendo otras Marcas',90]
], false, [5989,'Total Abiertos'], 69, 24);
$('pend').innerHTML = side([
  ['p0',32,22,69,'Precursadas',53],['p0',32,22,3,'Respaldadas',54],['p0',32,22,77,'Validadas',41],['p1',32,24,797,'Ingresadas',47]
], true, [946,'Total Pendientes'], 82, 18);

const F = 'Factura o Compraventa', I = 'Inscripcion o Transferencia', C = 'CAV para Curse', M = 'Mandato PAC', O = 'OT Instalacion GPS';
const LW = {[F]:102, [I]:116, [C]:66, [M]:59, [O]:82};
// [label column width, [[label, note, note width], ...]]
const detail = ([lw, items]) => `<div class="mb-px ml-[70px] bg-[#e5e5e5]">` + items.map(([l, n, w]) =>
  `<div class="flex h-[17px] items-center text-[#707070]"><div class="flex shrink-0 items-center" style="width:${lw}px"><span class="w-[7px]">-</span>${T(l, LW[l])}</div><svg class="-mt-[3px] h-[14px] w-[14px] shrink-0"><use href="#ok"/></svg><div class="ml-[7px] w-[55px] shrink-0 pt-[3px] text-[10px] leading-[12px] font-bold text-[#008000]">${T('Postergado', 50)}</div>${n ? T(n, w) : ''}</div>`).join('') + `</div>`;
const three = (n, w) => [126, [[F, n, w],[I],[C]]];
const recs = [
  ['180231545','9999','KATHERINE MACARENA LABRA',138,'BMW',25,'1',5,2018,'15.990.000','6.990.000','JUAN SOTO.',54,0,three('Curse ok postergado, pendiente Fel. Cr. referido.',210)],
  ['180237454','9999','ELIAS JORGE GARIB',86,'CONSUMO',49,'CONSUMO',49,2018,'20.000.000','20.000.000','JUAN SOTO.',54,0,three()],
  ['170130953','9999','ALVARO CRISTIAN MUNOZ',118,'KAWASAKI',48,'KLX',17,2015,'2.500.000','2.000.000','PAULINA CORNEJO (E)',98,0,three('curse ok postergado, pendiente factura e inscripcion. Crédito perteneciente a funcionario',389)],
  ['170155670','9999','NICOLE ANDREA REYES',103,'SUZUKI',34,'CELERIO',39,2014,'4.380.000','3.504.000','PAULINA CORNEJO (E)',98,1,three('Curse ok postergado, pendiente compra venta.',204)],
  ['170181928','9999','ARTURO ALEJANDRO RIVERA',130,'FORD',25,'EXPLORER',46,2018,'26.200.000','10.700.000','JUAN SOTO.',54,0,three('Curse ok postergado, pendiente Fel. Cr. Referido.',212)],
  ['160093303','929','FRANCISCO JAVIER CRUZAT',121,'TOYOTA',36,'YARIS SEDAN',58,2016,'9.990.000','7.490.000','HECTOR ROMERO',80,0,[68,[[M]]]],
  ['170122549','760','ALTAMIRA SPA',65,'RENAULT',41,'SYMBOL',38,2017,'5.310.735','4.248.588','PAULINA CORNEJO (E)',98,1,[91,[[O]]]],
  ['170142448','665','MARTIN ALEJANDRO PARRA',126,'NISSAN',35,'PATHFINDER',56,2015,'19.000.000','19.000.000','PAULINA CORNEJO (E)',98,0,three('Curse ok postergado, pendiente Fel .',159)],
  ['170143202','634','RICARDO GUILLERMO TORO',126,'JEEP',20,'NEW GRAND CHEROKEE',108,2011,'13.000.000','9.000.000','PAULINA CORNEJO (E)',98,0,[111,[[F,'Curse ok postergado. Existe diferencia de valor vehiculo entre compra venta ($11.100.000) y aprobación ($13.000.000). Requiere documento complementario.',692]]]],
  ['170143193','624','IVAN MAURICIO FERRADA',117,'CHEVROLET',53,'SPARK',29,2012,'4.279.000','3.079.000','SERGIO OSORIO GUTIERREZ',124,1,[76,[[C,'Pendiente PAC correcto.',105],[M,'error en nombre de titular',115]]]],
  ['170145605','578','CECILIA ANGELICA SAAVEDRA TRONCOSO',186,'KIA MOTORS',58,'CERATO',35,2011,'5.300.000','2.800.000','ROBERTO BARAHONA',98,0,[68,[[M,'error en nº de cuenta',94]]]],
  ['170157884','575','NV ASESORIAS E INVERSIONES S.A.',156,'LAND ROVER',59,'FREELANDER',57,2017,'82.000.000','82.000.000','PAULINA CORNEJO (E)',98,0,three('Curse ok postergado, pendiente nuevo pagare sin error de impresión / pendiente solicitud de primera inscripcion / prepago op. anterior',593)]
];
const num = s => T(s, s.length === 10 ? 49 : 44);
$('grid').innerHTML = detail([126, [[I],[C]]]) + recs.map(r =>
  `<div class="mb-px grid h-[13px] grid-cols-[69px_73px_344px_67px_112px_30px_58px_68px_131px] gap-x-px text-[10px] leading-[12px] font-bold text-[#3c3c3c] *:h-[13px] ${r[13] ? '*:bg-[#f0f0f0]' : '*:bg-[#e5e5e5]'}"><div class="text-[#1f4e6e] underline underline-offset-1">${T(r[0], 49)}</div><div>${T(r[1], r[1].length === 4 ? 22 : 16)}</div><div>${T(r[2], r[3])}</div><div>${T(r[4], r[5])}</div><div>${T(r[6], r[7])}</div><div>${T(r[8], 22)}</div><div>${num(r[9])}</div><div>${num(r[10])}</div><div>${T(r[11], r[12])}</div></div>` + detail(r[14])
).join('');

function fit() {
  const els = [...document.querySelectorAll('[data-w]')];
  els.forEach(e => { e.style.whiteSpace = 'nowrap'; e.style.letterSpacing = '0px'; });
  const ws = els.map(e => { const r = document.createRange(); r.selectNodeContents(e); return r.getBoundingClientRect().width; });
  els.forEach((e, i) => { e.style.letterSpacing = ((+e.dataset.w - ws[i]) / e.textContent.length).toFixed(3) + 'px'; });
}
fit();
addEventListener('load', () => { fit(); document.fonts.ready.then(fit); requestAnimationFrame(fit); });
new MutationObserver(fit).observe(document.head, { childList: true });
</script>
</body>
</html>
